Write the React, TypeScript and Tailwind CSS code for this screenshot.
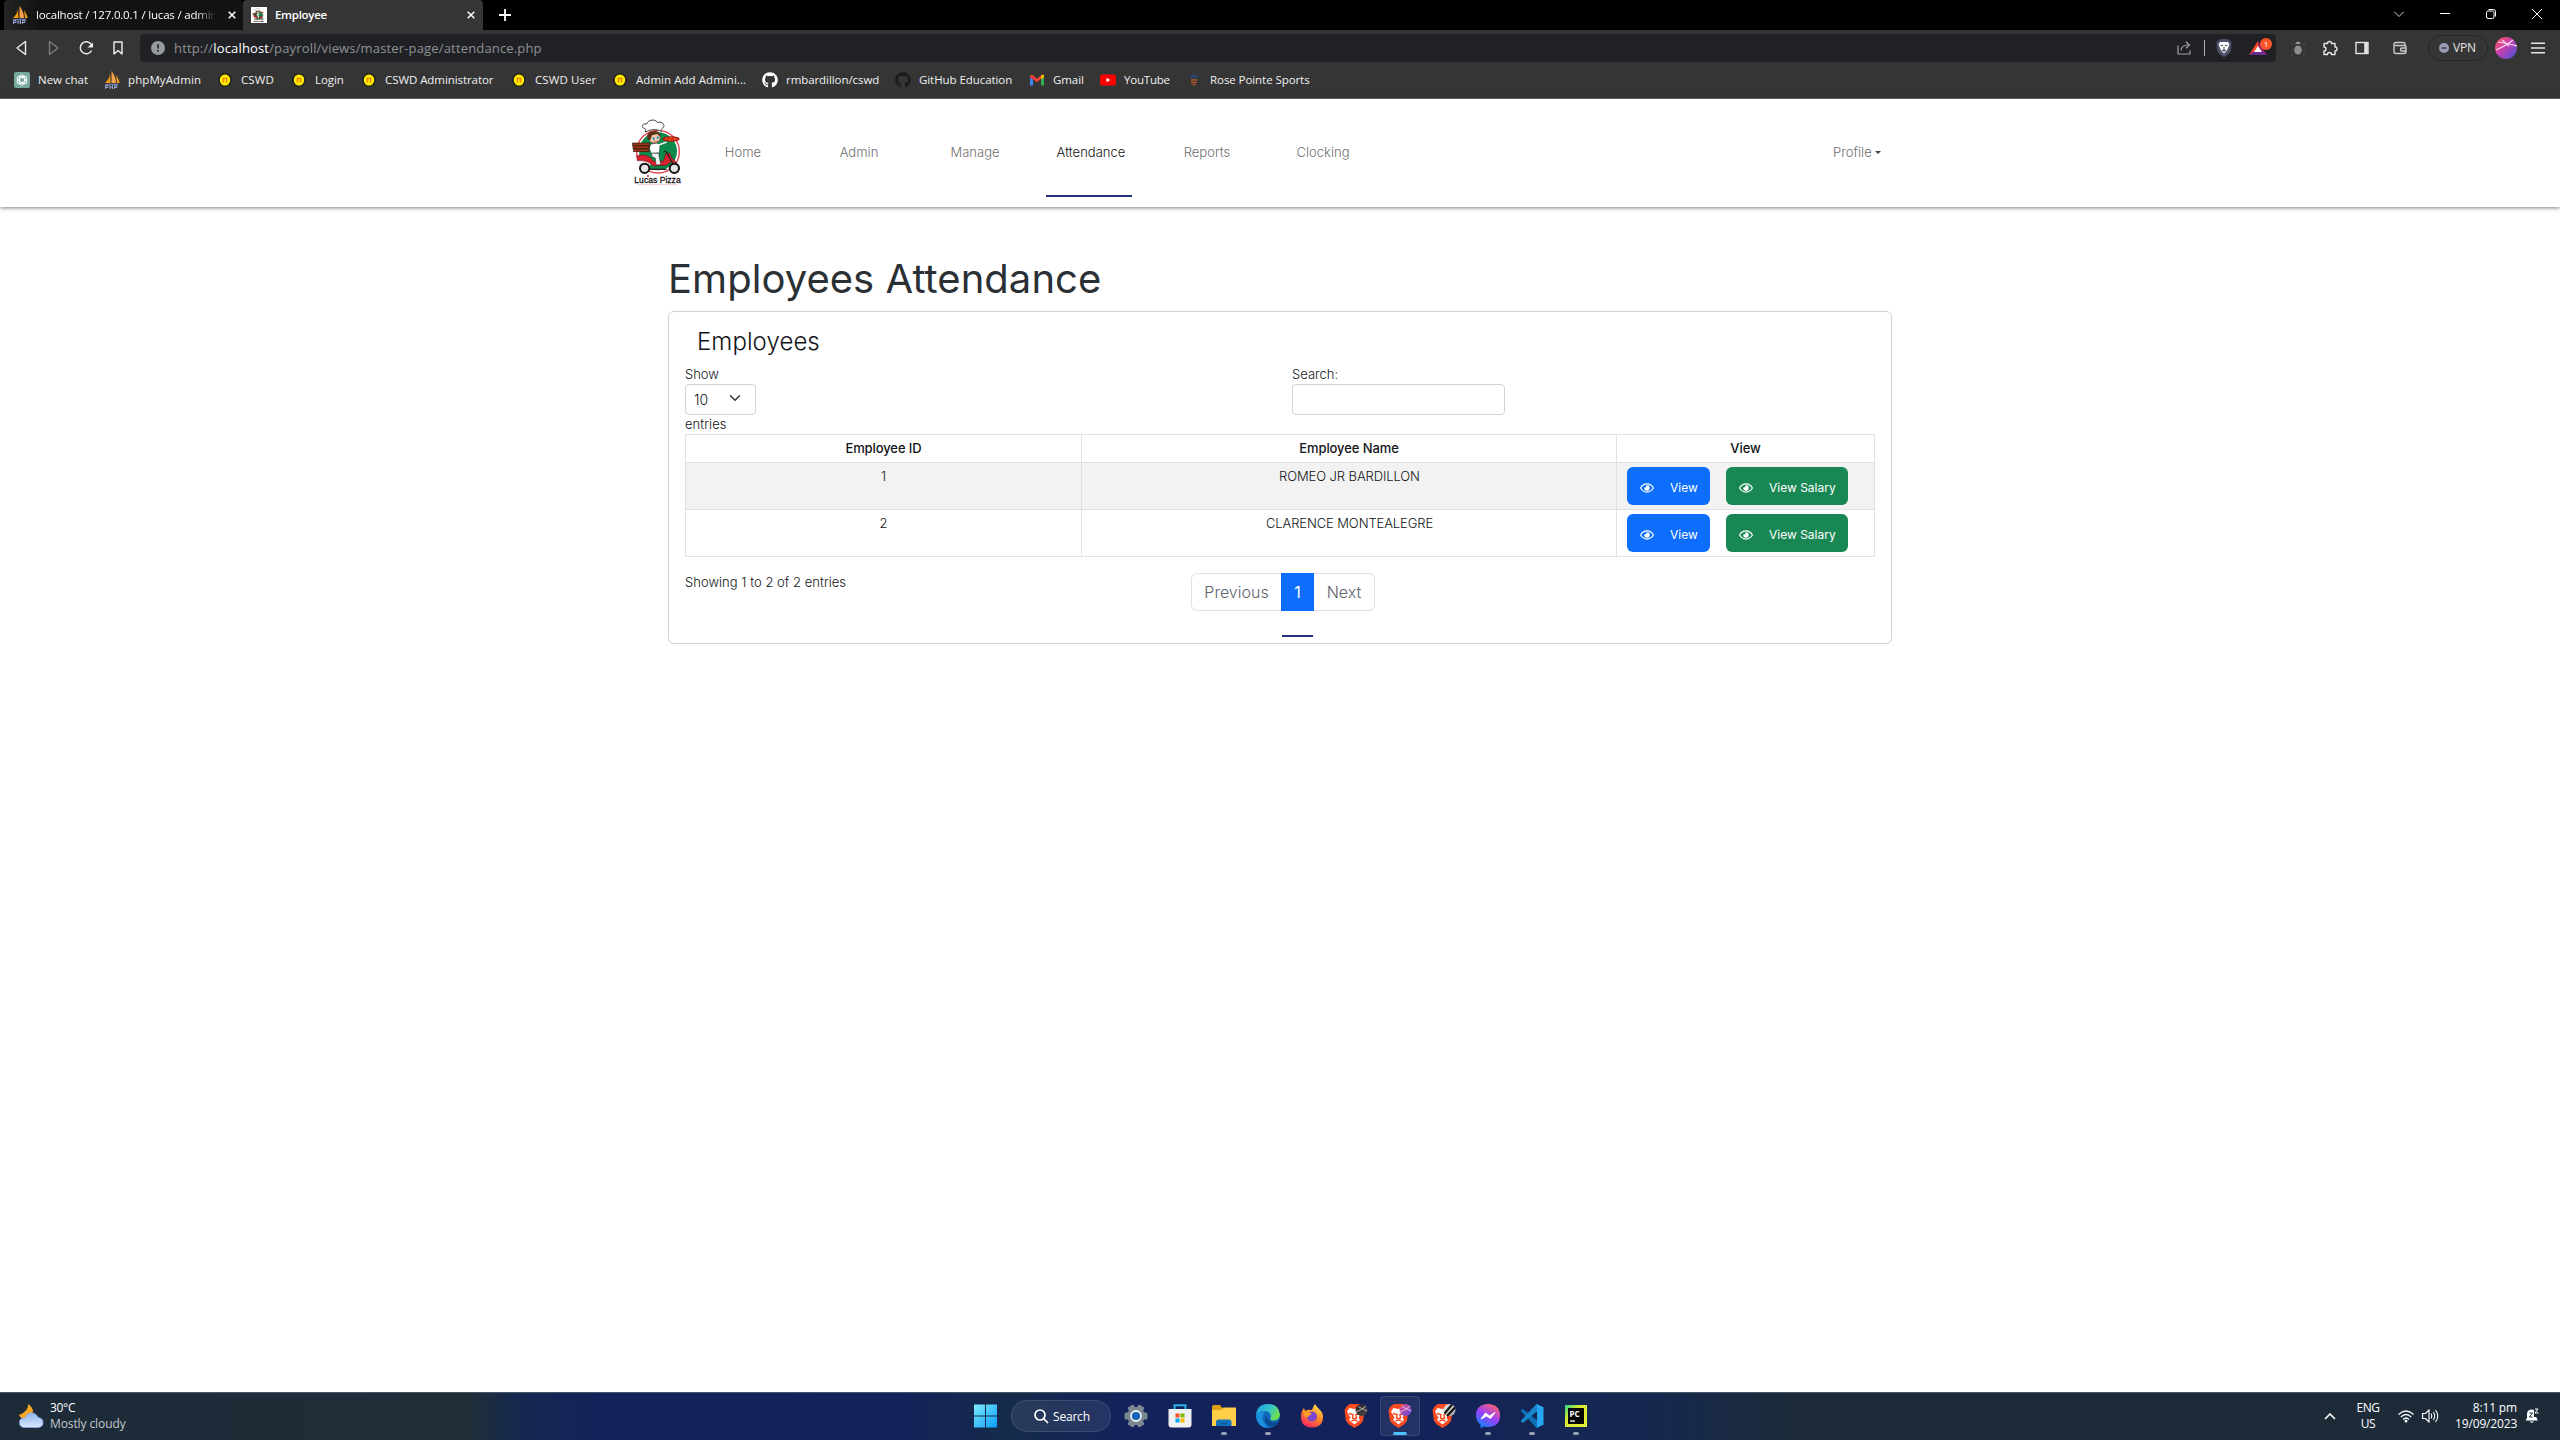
import React from "react";
import { FaGithub, FaRegEye } from "react-icons/fa";

const UI = "font-['Open_Sans','Noto_Sans',sans-serif]";

function SailIcon() {
  return (
    <svg width="16" height="18" viewBox="0 0 16 18">
      <path d="M6 2 C6 6 4 9 1 12 L6.500 12 Z" fill="#f89c0e" />
      <path d="M7.500 0 C10.500 4 12 8 12 12 L7.500 12 Z" fill="#f5a04a" />
      <path d="M12 4 C14 7 15.500 10 15.500 12 L13 12 Z" fill="#f89c0e" />
      <path d="M0 13 L15 12.500 L13.500 14 H2 Z" fill="#6c78af" />
      <path d="M1.500 18V14.500H4V16.500H2M6 14V18M6 16H8.500M8.500 14V18M10.500 18V14.500H13V16.500H11" stroke="#9aa3d0" strokeWidth="1" fill="none" />
    </svg>
  );
}

function CoinIcon() {
  return (
    <svg width="16" height="16" viewBox="0 0 16 16">
      <circle cx="8" cy="8" r="7" fill="#26261f" />
      <ellipse cx="8" cy="8" rx="5.2" ry="5.6" fill="#ffee00" />
      <path d="M6.300 10.500V6.300H9.700V10.500" fill="#ffd400" stroke="#e8720c" strokeWidth="1.100" />
    </svg>
  );
}

function ChatIcon() {
  return (
    <svg width="16" height="16" viewBox="0 0 16 16">
      <rect width="16" height="16" rx="2" fill="#74aa9c" />
      <g fill="none" stroke="#fff" strokeWidth="0.9">
        <ellipse cx="8" cy="8" rx="2.6" ry="5.3" />
        <ellipse cx="8" cy="8" rx="2.6" ry="5.3" transform="rotate(60 8 8)" />
        <ellipse cx="8" cy="8" rx="2.6" ry="5.3" transform="rotate(120 8 8)" />
      </g>
    </svg>
  );
}

function GmailIcon() {
  return (
    <svg width="16" height="16" viewBox="0 0 16 16">
      <path d="M1 3.5V13.5H4V7Z" fill="#4285f4" />
      <path d="M15 3.5V13.5H12V7Z" fill="#34a853" />
      <path d="M1 3.5L3 2.5L8 6.8L13 2.5V6L8 10.2L1 5Z" fill="#ea4335" />
      <path d="M12 3.5L15 2.6V5.2L12 7.4Z" fill="#fbbc04" />
      <path d="M1 4L4 6.2V7.5L1 5.3Z" fill="#c5221f" />
    </svg>
  );
}

function YoutubeIcon() {
  return (
    <svg width="16" height="16" viewBox="0 0 16 16">
      <rect y="2.5" width="16" height="11" rx="3" fill="#f00" />
      <path d="M6.5 5.7V10.3L10.3 8Z" fill="#fff" />
    </svg>
  );
}

function RoseIcon() {
  return (
    <svg width="16" height="16" viewBox="0 0 16 16">
      <path d="M4.500 3.500H11.500M5 5.500H11" stroke="#2a4676" strokeWidth="1.4" />
      <path d="M5 8H11M5 10.300H11M6.500 12.500H9.500" stroke="#b5592c" strokeWidth="1.300" />
    </svg>
  );
}

function PizzaLogo() {
  return (
    <svg width="80" height="80" viewBox="0 0 240 240">
      <circle cx="114" cy="125" r="64" fill="#fff" stroke="#e5404c" strokeWidth="4" />
      <circle cx="114" cy="124" r="57" fill="#0b8a4b" />
      <path d="M52 150 C66 142 84 146 92 162 L88 170 L60 168 Z" fill="#f4f4f4" />
      <path d="M50 138 C70 130 92 138 100 154 L130 154 L138 130 L150 130 C152 146 164 150 172 160 L152 156 L138 166 L100 168 C88 154 66 150 52 152 Z" fill="#d9202e" stroke="#5a0d12" strokeWidth="1.5" />
      <path d="M92 103 L110 99 L120 104 L118 128 L94 130 L88 116 Z" fill="#fff" stroke="#333" strokeWidth="1.5" />
      <path d="M114 106 L140 96" stroke="#f3f3f3" strokeWidth="5" />
      <path d="M94 130 H116 L122 164 H108 L106 144 L96 140 Z" fill="#f3f3f3" stroke="#222" strokeWidth="1.5" />
      <ellipse cx="103" cy="82" rx="18" ry="18" fill="#f5c9a5" stroke="#3c2113" strokeWidth="1.5" />
      <path d="M83 86 C78 70 88 64 104 63 C116 63 122 72 120 80 L112 72 L96 76 L90 92 Z" fill="#5c3018" />
      <ellipse cx="101" cy="86" rx="3.4" ry="4" fill="#2a93d1" />
      <ellipse cx="113" cy="83" rx="3" ry="4" fill="#2a93d1" />
      <path d="M100 95 Q108 98 114 92" stroke="#a3231d" strokeWidth="2" fill="none" />
      <path d="M76 66 C76 60 77 57 74 55 C62 54 66 38 80 42 C84 28 108 26 112 38 C126 32 138 46 128 54 C124 56 124 60 124 64 C108 56 92 58 76 66 Z" fill="#fff" stroke="#333" strokeWidth="2.8" />
      <ellipse cx="153" cy="87" rx="25" ry="7" fill="#d62718" stroke="#7b2410" strokeWidth="2.5" />
      <path d="M138 85H142M150 83H155M162 87H167M148 90H152" stroke="#f3a32c" strokeWidth="2.5" />
      <g fill="#9a3617" stroke="#3e1408" strokeWidth="2">
        <rect x="38" y="99" width="50" height="8" />
        <rect x="39" y="108" width="48" height="8" />
        <rect x="41" y="117" width="46" height="8" />
      </g>
      <path d="M140 128 L160 162 M142 128 L132 122" stroke="#222" strokeWidth="3.500" />
      <g fill="#e6e6e6" stroke="#141414" strokeWidth="6">
        <circle cx="74" cy="175" r="14" />
        <circle cx="163" cy="175" r="14" />
      </g>
      <path d="M90 178 H140" stroke="#222" strokeWidth="4" />
      <text x="43" y="219" textLength="139" lengthAdjust="spacingAndGlyphs" fontFamily="Liberation Sans" fontWeight="400" fontSize="27" fill="#111" stroke="#111" strokeWidth=".8">Lucas Pizza</text>
      <path d="M52 224 H172" stroke="#efb0b4" strokeWidth="2" />
      <circle cx="84" cy="198" r="3" fill="#d9202e" />
    </svg>
  );
}

function Tabs() {
  return (
    <div className="flex h-[30px] bg-black pl-1 text-[11.5px] text-white">
      <div className="flex w-[239px] items-center rounded-t-[4px] bg-gradient-to-r from-[#242424] via-[#121212] via-15% to-[#121212] pl-2">
        <SailIcon />
        <div className="ml-2 w-[180px] overflow-hidden whitespace-nowrap tracking-[-0.2px] [mask-image:linear-gradient(to_right,black_160px,transparent_180px)]">localhost / 127.0.0.1 / lucas / admin</div>
        <svg className="ml-[12px]" width="8" height="8" viewBox="0 0 8 8"><path d="M.7.7L7.3 7.3M7.3.7L.7 7.3" stroke="#fff" strokeWidth="1.5" /></svg>
      </div>
      <div className="flex w-[240px] items-center rounded-t-[4px] bg-[#363636] pl-2 font-semibold">
        <div className="h-4 w-4 overflow-hidden bg-white [&>svg]:-ml-[2px] [&>svg]:-mt-[1px] [&>svg]:h-[18px] [&>svg]:w-[20px]"><PizzaLogo /></div>
        <div className="ml-2 w-[192px] tracking-[-0.3px]">Employee</div>
        <svg width="8" height="8" viewBox="0 0 8 8"><path d="M.7.7L7.3 7.3M7.3.7L.7 7.3" stroke="#fff" strokeWidth="1.5" /></svg>
      </div>
      <svg className="ml-4 mt-[9px]" width="12" height="12" viewBox="0 0 12 12"><path d="M6 0V12M0 6H12" stroke="#fff" strokeWidth="1.8" /></svg>
      <div className="ml-auto flex h-7 items-center">
        <svg className="mr-9" width="10" height="6" viewBox="0 0 10 6"><path d="M0 0.5L5 5.5L10 .5" stroke="#ccc" fill="none" /></svg>
        <svg className="mr-9" width="10" height="2"><path d="M0 .5H10" stroke="#fff" /></svg>
        <svg className="mr-9" width="10" height="10" viewBox="0 0 10 10"><rect x=".5" y="2" width="7.5" height="7.5" rx="1.5" stroke="#fff" fill="none" /><path d="M2.5 .5H7.5Q9.5 .5 9.5 2.5V7.5" stroke="#fff" fill="none" /></svg>
        <svg className="mr-[18px]" width="10" height="10" viewBox="0 0 10 10"><path d="M0 0L10 10M10 0L0 10" stroke="#fff" /></svg>
      </div>
    </div>
  );
}

function LionShield() {
  return (
    <svg width="16" height="18" viewBox="0 0 16 18">
      <path d="M3 1L5 0H11L13 1L15.5 3L15 11Q14 15 8 18Q2 15 1 11L.5 3Z" fill="#4c4f68" />
      <path d="M4 3H12L13.5 5.5L12 9L11 11.5L8 14.5L5 11.5L4 9L2.5 5.5Z" fill="#fff" />
      <path d="M4.5 6L7 7M11.5 6L9 7M8 8V11M6 11L8 12.3L10 11" stroke="#4c4f68" strokeWidth="1.1" fill="none" />
    </svg>
  );
}

function Toolbar() {
  return (
    <div className="flex h-9 items-center bg-[#353535]">
      <div className="flex h-full w-[140px] items-center">
        <svg width="140" height="36" viewBox="0 0 140 36" fill="none" stroke="#eee" strokeWidth="1.4" strokeLinejoin="round">
          <path d="M25.5 11.5V24.5L17 18Z" />
          <path d="M49.5 11.5V24.5L58 18Z" stroke="#7b7b7b" />
          <path d="M91.3 14.5A6 6 0 1 0 91.6 20.5" />
          <path d="M93 12.5V17.5H87.5Z" fill="#eee" stroke="none" />
          <path d="M114 12H122V24L118 20.5L114 24Z" />
        </svg>
      </div>
      <div className="flex h-7 w-[2136px] items-center rounded-[4px] bg-[#202125]">
        <svg className="ml-[11px]" width="14" height="14" viewBox="0 0 14 14"><circle cx="7" cy="7" r="7" fill="#9599a0" /><path d="M7 3.3V7.6M7 9V10.7" stroke="#202125" strokeWidth="1.6" /></svg>
        <div className="ml-[9px] mt-px whitespace-nowrap text-[13px] tracking-[0.16px] text-[#8f9195]">http://<span className="text-white">localhost</span>/payroll/views/master-page/attendance.php</div>
        <div className="ml-auto flex items-center">
          <svg width="15" height="14" viewBox="0 0 15 14" fill="none" stroke="#a2a3a5" strokeWidth="1.2"><path d="M1 4.5V13H13V9.5M4 9.5Q4.5 4 11 4M9 .8L12.5 4L9 7.2" /></svg>
          <div className="ml-3 h-4 w-px bg-[#b0b0b0]" />
          <div className="ml-[11px]"><LionShield /></div>
          <div className="relative ml-[17px] mr-[7px] h-5 w-5">
            <svg className="mt-[2px]" width="18" height="16" viewBox="0 0 18 16"><path d="M9 1L0 15H4.500L9 8Z" fill="#ff4724" /><path d="M9 1L18 15H13.500L9 8Z" fill="#9e1f63" /><path d="M0 15H18L14 11.500H4Z" fill="#662d91" /><path d="M9 6L13 12H5Z" fill="#fff" /></svg>
            <div className="absolute left-[11px] top-0 flex h-[12px] w-[12px] items-center justify-center rounded-full bg-[#fb542b] text-[8px] leading-none text-white">1</div>
          </div>
        </div>
      </div>
      <svg width="150" height="36" viewBox="2276 30 150 36" fill="none" stroke="#e6e6e6" strokeWidth="1.4">
        <ellipse cx="2298" cy="50" rx="3.8" ry="4.6" fill="#8c8c8c" stroke="none" />
        <path d="M2295 44Q2298 39 2301 44Z" fill="#999" stroke="none" />
        <path d="M2293 45L2291 43M2303 45L2305 43M2293 50H2291M2303 50H2305M2293 54L2291 56M2303 54L2305 56" stroke="#484848" />
        <path d="M2324 43.500H2327.500Q2327.500 41.500 2329.500 41.500T2331.500 43.500H2335V47Q2337 47 2337 49T2335 51V54.500H2331.500Q2331.500 52.500 2329.500 52.500T2327.500 54.500H2324V51Q2326 51 2326 49T2324 47Z" strokeLinejoin="round" />
        <rect x="2356" y="42.500" width="12" height="11" />
        <path d="M2366 42.500V53.500" strokeWidth="3.500" />
        <path d="M2405 45.500V44Q2405 42.500 2403.500 42.500H2396Q2394 42.500 2394 44.500V51.500Q2394 53.500 2396 53.500H2404Q2406 53.500 2406 51.500V47Q2406 45.500 2404.500 45.500H2395" stroke="#ccc" />
        <path d="M2406 48H2402Q2400.500 48 2400.500 49.500T2402 51H2406" stroke="#ccc" />
      </svg>
      <div className="ml-[2px] flex h-[26px] w-[60px] items-center rounded-full border border-[#262626] pl-[10px] text-[12px] tracking-[-0.2px] text-[#e4e4e4]">
        <svg className="mr-[4px]" width="10" height="10" viewBox="0 0 10 10"><circle cx="5" cy="5" r="5" fill="#9a9bb5" /><path d="M2.500 5H7.500" stroke="#353535" strokeWidth="1.400" /></svg>VPN
      </div>
      <svg className="ml-[7px]" width="22" height="22" viewBox="0 0 22 22">
        <defs><linearGradient id="av" x1="0" y1="0" x2="1" y2="1"><stop offset="0" stopColor="#ff5a4d" /><stop offset=".45" stopColor="#c83fae" /><stop offset="1" stopColor="#3a55e0" /></linearGradient></defs>
        <circle cx="11" cy="11" r="11" fill="url(#av)" />
        <path d="M1 13Q12 8 18 3M3 5Q12 6 22 9M7 3L14 9" stroke="#f7d5f2" strokeWidth="1.200" fill="none" />
      </svg>
      <svg className="ml-[14px]" width="14" height="12" viewBox="0 0 14 12"><path d="M0 1.200H14M0 6H14M0 10.800H14" stroke="#e6e6e6" strokeWidth="1.500" /></svg>
    </div>
  );
}

function Bookmarks() {
  const gh = (c: string) => <FaGithub size={16} color={c} />;
  const items: [React.ReactNode, string, string][] = [
    [<ChatIcon />, "New chat", "w-[90px] tracking-[0px]"],
    [<SailIcon />, "phpMyAdmin", "w-[113px] tracking-[0.1px]"],
    [<CoinIcon />, "CSWD", "w-[74px] tracking-[0.1px]"],
    [<CoinIcon />, "Login", "w-[70px]"],
    [<CoinIcon />, "CSWD Administrator", "w-[150px]"],
    [<CoinIcon />, "CSWD User", "w-[101px] tracking-[0.1px]"],
    [<CoinIcon />, "Admin Add Admini...", "w-[150px] tracking-[0.05px]"],
    [gh("#fff"), "rmbardillon/cswd", "w-[133px]"],
    [gh("#1b1b1b"), "GitHub Education", "w-[134px]"],
    [<GmailIcon />, "Gmail", "w-[71px]"],
    [<YoutubeIcon />, "YouTube", "w-[86px] tracking-[-0.2px]"],
    [<RoseIcon />, "Rose Pointe Sports", "w-[123px]"],
  ];
  return (
    <div className="flex h-[33px] items-center border-b border-[#6a6a6a] bg-[#353535] pb-[4px] pl-[14px] text-[11.5px] tracking-[-0.07px] text-[#f1f1f1]">
      {items.map(([icon, label, w]) => (
        <div key={label} className={"flex shrink-0 items-center gap-2 whitespace-nowrap " + w}>
          <span className="flex w-4 shrink-0 justify-center">{icon}</span>
          <span className="-mt-px">{label}</span>
        </div>
      ))}
    </div>
  );
}

function Nav() {
  const links = ["Home", "Admin", "Manage", "Attendance", "Reports", "Clocking"];
  return (
    <nav className="flex h-[108px] bg-white pl-[620px] text-[13px] font-light text-[#6f6f6f] shadow-[0_1px_4px_rgba(0,0,0,0.5)]">
      <div className="mt-[11px] w-[78px]"><PizzaLogo /></div>
      <div className="flex gap-[30px] pt-[43px]">
        {links.map((l) => (
          <div key={l} className={"flex h-[55px] w-[86px] justify-center pl-[4px] leading-[21px] tracking-[0.03px] " + (l === "Attendance" ? "border-b-2 border-[#23317e] text-[#111]" : "")}>{l}</div>
        ))}
      </div>
      <div className="ml-[469px] mt-[43px] flex h-[21px] items-center tracking-[0.05px]">
        Profile
        <span className="ml-[3px] border-x-[3.500px] border-t-[3.500px] border-x-transparent border-t-[#444]" />
      </div>
    </nav>
  );
}

function ViewButton({ label, cls }: { label: string; cls: string }) {
  return (
    <div className={"flex h-[38px] items-center rounded-[6px] pl-[13px] text-[12px] text-white " + cls}>
      <FaRegEye size={14} className="mt-[3px]" />
      <span className="ml-4 mt-[3px] whitespace-nowrap font-normal">{label}</span>
    </div>
  );
}

function EmployeeCard() {
  const rows = [["1", "ROMEO JR BARDILLON"], ["2", "CLARENCE MONTEALEGRE"]];
  const grid = "grid grid-cols-[396px_535px_258px]";
  const cell = "border-r border-b border-[#dee2e6] text-center";
  return (
    <section className="h-[333px] w-[1224px] rounded-[6px] border border-[#d0d0d0] bg-white px-4 pt-[13px] text-[13px] font-light leading-5 text-[#111418]">
      <h2 className="pl-3 text-[24px] leading-[34px] tracking-[0.08px]">Employees</h2>
      <div className="mt-[5px] flex">
        <div className="w-[607px]">
          <div>Show</div>
          <div className="flex h-[31px] w-[71px] items-center rounded-[4px] border border-[#ced4da] pl-2 text-[14px]">
            <span className="w-4">10</span>
            <svg className="ml-[19px] -mt-1" width="12" height="12" viewBox="0 0 16 16"><path d="M2 5l6 6 6-6" fill="none" stroke="#343a40" strokeWidth="2" strokeLinecap="round" strokeLinejoin="round" /></svg>
          </div>
          <div className="h-[19px] leading-[19px] tracking-[0.05px]">entries</div>
        </div>
        <div>
          <div>Search:</div>
          <div className="h-[31px] w-[213px] rounded-[4px] border border-[#ced4da]" />
        </div>
      </div>
      <div className="w-[1190px] border-l border-t border-[#dee2e6]">
        <div className={grid + " h-7 font-medium leading-[27px] tracking-[-0.1px]"}>
          <div className={cell}>Employee ID</div>
          <div className={cell}>Employee Name</div>
          <div className={cell}>View</div>
        </div>
        {rows.map(([id, name], i) => (
          <div key={id} className={grid + " h-[47px] leading-[27px] " + (i === 0 ? "bg-[#f2f2f2]" : "")}>
            <div className={cell}>{id}</div>
            <div className={cell + " tracking-[-0.1px] pl-px"}>{name}</div>
            <div className={cell + " flex gap-4 pl-[10px] pt-1"}>
              <ViewButton label="View" cls="w-[83px] bg-[#0d6efd]" />
              <ViewButton label="View Salary" cls="w-[122px] bg-[#198754]" />
            </div>
          </div>
        ))}
      </div>
      <div className="flex pt-4">
        <div className="w-[506px] leading-[19px] tracking-[0.03px]">Showing 1 to 2 of 2 entries</div>
        <div className="flex text-[16px] leading-9 text-[#5c656d]">
          <div className="h-[38px] w-[90px] rounded-l-[6px] border border-r-0 border-[#dee2e6] text-center">Previous</div>
          <div className="flex w-[33px] flex-col items-center">
            <div className="h-[38px] w-full bg-[#0d6efd] text-center leading-[38px] font-normal text-white">1</div>
            <div className="mt-6 h-[2px] w-[31px] bg-[#23317e]" />
          </div>
          <div className="h-[38px] w-[61px] rounded-r-[6px] border border-l-0 border-[#dee2e6] text-center">Next</div>
        </div>
      </div>
    </section>
  );
}

function Brave({ id, a, b }: { id: string; a: string; b: string }) {
  return (
    <svg width="24" height="26" viewBox="0 0 24 26">
      <defs><linearGradient id={id} x1="0" y1="0" x2="1" y2="1"><stop offset="0" stopColor={a} /><stop offset="1" stopColor={b} /></linearGradient></defs>
      <path d="M6 1H15L18 3L21 6L20 11L19 18L16 21.500L10.500 25L5 21.500L2 18L1 11L.5 7L2.500 3.500Z" fill="#fb4a1f" />
      <path d="M5.500 5L10.500 6L16 5L18 8.500L16 12L14.500 14.500L16 17L10.500 21.500L5 17L6.500 14.500L5 12L3 8.500Z" fill="#fff" />
      <path d="M5 10.500L9 11.500L8.500 15L10.500 16L12.500 15L12 11.500L16 10.500M7.500 18L10.500 16.800L13.500 18" stroke="#fb4a1f" strokeWidth="1.500" fill="none" />
      <circle cx="17.500" cy="7" r="6" fill={"url(#" + id + ")"} />
      {id === "b3" ? (
        <path d="M12.500 10.500L20 1.500M15 13L23 4.500" stroke="#111" strokeWidth="2" fill="none" />
      ) : (
        <path d="M12 9Q18 7 22 3M14 3.500L23 8" stroke="#ffffffaa" strokeWidth=".9" fill="none" />
      )}
    </svg>
  );
}

function TaskIcon({ children, state }: { children: React.ReactNode; state?: "open" | "active" }) {
  return (
    <div className={"relative flex h-10 w-10 items-center justify-center rounded-[4px] " + (state === "active" ? "border border-white/10 bg-white/[0.07]" : "")}>
      {children}
      {state === "open" && <div className="absolute bottom-[1px] left-[17px] h-[3px] w-[6px] rounded-full bg-[#9aa0b4]" />}
      {state === "active" && <div className="absolute bottom-0 left-[12px] h-[3px] w-[14px] rounded-full bg-[#4cc2ff]" />}
    </div>
  );
}

function Taskbar() {
  return (
    <footer className="flex h-12 items-center border-t border-[#4a5568] bg-[linear-gradient(90deg,#1d2b39_0px,#1f2d38_400px,#202e37_470px,#152851_520px,#12235a_600px,#14225a_900px,#152b4a_1010px,#13225a_1120px,#13225a_1400px,#152850_1640px,#1d2b39_1800px,#1d2b39_2560px)] pb-px text-[12px] text-white">
      <div className="flex w-[965px] items-center pl-[18px]">
        <svg width="26" height="26" viewBox="0 0 26 26">
          <defs><linearGradient id="cl" x1="0" y1="0" x2="0" y2="1"><stop offset="0" stopColor="#8fb4f2" /><stop offset="1" stopColor="#dbe8fd" /></linearGradient></defs>
          <path d="M10 1Q11 8 1 12Q3 17 10 16Q17 10 14 5Q12 2 10 1Z" fill="#f9a825" />
          <path d="M6 24.500H20Q25 24 25 19.500T20 14.500Q18 9.500 12.500 10Q8 10.500 7.500 15Q1.500 14.500 1.500 19.500Q1.500 24 6 24.500Z" fill="url(#cl)" stroke="#84a9ec" strokeWidth=".8" />
        </svg>
        <div className="ml-[6px] leading-4"><div className="tracking-[-0.3px]">30°C</div><div className="text-[#c3c8cd] tracking-[-0.1px]">Mostly cloudy</div></div>
      </div>
      <div className="flex items-center">
        <TaskIcon>
          <svg width="24" height="24" viewBox="0 0 24 24"><defs><linearGradient id="wn" x1="0" y1="0" x2="1" y2="1"><stop offset="0" stopColor="#7cecff" /><stop offset="1" stopColor="#0a9cf5" /></linearGradient></defs><path d="M1 .5H12V11.500H1ZM13 .5H24V11.500H13ZM1 12.500H12V23.500H1ZM13 12.500H24V23.500H13Z" fill="url(#wn)" /></svg>
        </TaskIcon>
        <div className="ml-[6px] mr-[5px] flex h-8 w-[100px] items-center rounded-full border border-white/10 bg-white/[0.08] pl-[22px]">
          <svg width="15" height="15" viewBox="0 0 15 15" fill="none" stroke="#fff" strokeWidth="1.700"><circle cx="6" cy="6" r="5" /><path d="M9.500 9.500L14 14" /></svg>
          <span className="ml-1 mt-px tracking-[-0.2px]">Search</span>
        </div>
        <div className="flex gap-1">
          <TaskIcon>
            <svg width="24" height="24" viewBox="0 0 24 24"><g fill="#7c8791"><circle cx="12" cy="12" r="9" /><rect x="8.500" y="0.500" width="7" height="23" rx="1.500" transform="rotate(30 12 12)" /><rect x="8.500" y="0.500" width="7" height="23" rx="1.500" transform="rotate(90 12 12)" /><rect x="8.500" y="0.500" width="7" height="23" rx="1.500" transform="rotate(150 12 12)" /></g><circle cx="12" cy="12" r="5" fill="#1167b5" stroke="#e8edf2" strokeWidth="1.800" /></svg>
          </TaskIcon>
          <TaskIcon>
            <svg width="24" height="24" viewBox="0 0 24 24"><path d="M6.500 5V1.200H17.500V5" fill="none" stroke="#29b3f0" strokeWidth="2" /><path d="M.5 5H23.500V20.500Q23.500 23.500 20.500 23.500H3.500Q.5 23.500 .5 20.500Z" fill="#eef1f4" /><path d="M7.500 9.500H11.500V13.500H7.500Z" fill="#f25022" /><path d="M12.500 9.500H16.500V13.500H12.500Z" fill="#7fba00" /><path d="M7.500 14.500H11.500V18.500H7.500Z" fill="#00a4ef" /><path d="M12.500 14.500H16.500V18.500H12.500Z" fill="#ffb900" /></svg>
          </TaskIcon>
          <TaskIcon state="open">
            <svg width="24" height="22" viewBox="0 0 24 22"><path d="M0 2Q0 0 2 0H8L10 2.500V6H0Z" fill="#e09e12" /><path d="M0 5H9L11 2.500H24V21H0Z" fill="#ffcf48" /><path d="M4 21V17Q4 14.500 6.500 14.500H17Q19.500 14.500 19.500 17V21Z" fill="#1173bd" /><path d="M8 18.500H15.500" stroke="#0c5a9a" strokeWidth="1.500" /></svg>
          </TaskIcon>
          <TaskIcon state="open">
            <svg width="24" height="24" viewBox="0 0 24 24"><defs><linearGradient id="eg" x1="0" y1="0" x2="1" y2=".4"><stop offset="0" stopColor="#1b9de2" /><stop offset=".6" stopColor="#35c1c8" /><stop offset="1" stopColor="#6be04f" /></linearGradient></defs><circle cx="12" cy="12" r="12" fill="#1066b8" /><path d="M0 11Q1 0 12 0T24 11Q23 17 16 16.500Q13.500 16 14.500 14Q16 8 9 7Q3 7 0 11Z" fill="url(#eg)" /><path d="M0 11Q4 6 9 7.500Q4 14 9 20Q11 23 13 24Q1 24 0 11Z" fill="#1a90de" /><path d="M13 16Q17 20 22.500 17.500Q19 23 13 22Q7 18 10 12Q11 15 13 16Z" fill="#0d4a94" /></svg>
          </TaskIcon>
          <TaskIcon>
            <svg width="24" height="24" viewBox="0 0 24 24"><defs><linearGradient id="ff" x1=".8" y1="0" x2=".3" y2="1"><stop offset="0" stopColor="#ffe14a" /><stop offset=".5" stopColor="#ff8a2a" /><stop offset="1" stopColor="#f5245f" /></linearGradient></defs><path d="M15 0Q17 3 19 5Q23 8 23 13Q23 23 12 23.500Q1 23 1 13Q1 7 4 4L5 7Q8 5 12 6Q13 3 15 0Z" fill="url(#ff)" /><circle cx="12" cy="12.500" r="5" fill="#7b45d0" /><path d="M3 7Q8 6 12 10Q9 11 8 13Q6 14 4 11Z" fill="#ff9a26" /></svg>
          </TaskIcon>
          <TaskIcon><Brave id="b1" a="#222" b="#4b4b4b" /></TaskIcon>
          <TaskIcon state="active"><Brave id="b2" a="#ef4e83" b="#5a4be0" /></TaskIcon>
          <TaskIcon><Brave id="b3" a="#eee" b="#999" /></TaskIcon>
          <TaskIcon state="open">
            <svg width="24" height="24" viewBox="0 0 24 24"><defs><linearGradient id="ms" x1=".2" y1="1" x2=".8" y2="0"><stop offset="0" stopColor="#0a84ff" /><stop offset=".5" stopColor="#9a40fb" /><stop offset="1" stopColor="#ff6569" /></linearGradient></defs><path d="M12 0Q24 .5 24 11.500T12 23Q10 23 8 22.500L4.500 24V20.500Q0 17 0 11.500Q0 .5 12 0Z" fill="url(#ms)" /><path d="M5 15L9.500 9L13.500 12L19 8.500L14.500 14.500L10.500 12Z" fill="#fff" stroke="#fff" /></svg>
          </TaskIcon>
          <TaskIcon state="open">
            <svg width="24" height="24" viewBox="0 0 24 24"><path d="M1 6.500L3 5.500L18 17.500V23L16.500 23.500Z" fill="#0f6fb4" stroke="#0f6fb4" /><path d="M1 17L3 18.500L18 6V1L16.500 .5Z" fill="#1787ce" stroke="#1787ce" /><path d="M17 .3L23.500 3.300V20.700L17 23.700Z" fill="#27a5ee" /></svg>
          </TaskIcon>
          <TaskIcon state="open">
            <svg width="22" height="22" viewBox="0 0 22 22"><defs><linearGradient id="pc" x1="0" y1="0" x2="1" y2="1"><stop offset="0" stopColor="#21d789" /><stop offset=".35" stopColor="#d8e830" /><stop offset="1" stopColor="#e8ee38" /></linearGradient></defs><rect width="22" height="22" fill="url(#pc)" /><rect x="3" y="3" width="16" height="16" fill="#050505" /><text x="4.500" y="11.500" fontSize="8" fontWeight="700" fontFamily="Open Sans" fill="#fff">PC</text><path d="M5 16H10" stroke="#fff" strokeWidth="1.300" /></svg>
          </TaskIcon>
        </div>
      </div>
      <div className="ml-auto flex items-center text-[12px] leading-4">
        <svg width="12" height="7" viewBox="0 0 12 7"><path d="M1 6L6 1L11 6" fill="none" stroke="#fff" strokeWidth="1.600" /></svg>
        <div className="ml-[19px] w-[26px] text-center tracking-[-0.4px]">ENG<br />US</div>
        <svg className="ml-[17px]" width="16" height="13" viewBox="0 0 16 13" fill="none" stroke="#fff" strokeWidth="1.200"><path d="M.5 4.500Q8-2.500 15.500 4.500M2.800 7Q8 2 13.200 7M5 9.500Q8 6.500 11 9.500" /><circle cx="8" cy="11" r="1.500" fill="#fff" stroke="none" /></svg>
        <svg className="ml-2" width="17" height="14" viewBox="0 0 17 14" fill="none" stroke="#fff" strokeWidth="1.100"><path d="M.6 4.500H3.500L7 1V13L3.500 9.500H.6ZM9 4.500Q10.500 7 9 9.500M11.300 3Q14 7 11.300 11M13.500 1Q18 7 13.500 13" /></svg>
        <div className="ml-4 w-[62px] whitespace-nowrap text-right tracking-[-0.15px]"><div>8:11 pm</div><div>19/09/2023</div></div>
        <svg className="ml-[8px] mr-[20px]" width="15" height="16" viewBox="0 0 15 16"><path d="M2 10V6Q2 1.500 7 1.500L9 2V9H11.500V10L13 12.500H.5ZM4.500 13.500H9Q7 16 4.500 13.500Z" fill="#fff" /><path d="M4.500 5H7.500L4.500 9H7.500" stroke="#1d2b39" fill="none" /><path d="M10 1H13L10 5H13.500" stroke="#fff" fill="none" /></svg>
      </div>
    </footer>
  );
}

export default function App() {
  return (
    <div className={"flex h-[1440px] w-[2560px] flex-col overflow-hidden bg-white " + UI}>
      <Tabs />
      <Toolbar />
      <Bookmarks />
      <main className="flex-1 font-['Inter',sans-serif]">
        <Nav />
        <div className="pl-[668px] pt-[48px]">
          <h1 className="mb-2 text-[40px] font-normal leading-[48px] tracking-[0.04px] text-[#2b3035]">Employees Attendance</h1>
          <EmployeeCard />
        </div>
      </main>
      <Taskbar />
    </div>
  );
}
